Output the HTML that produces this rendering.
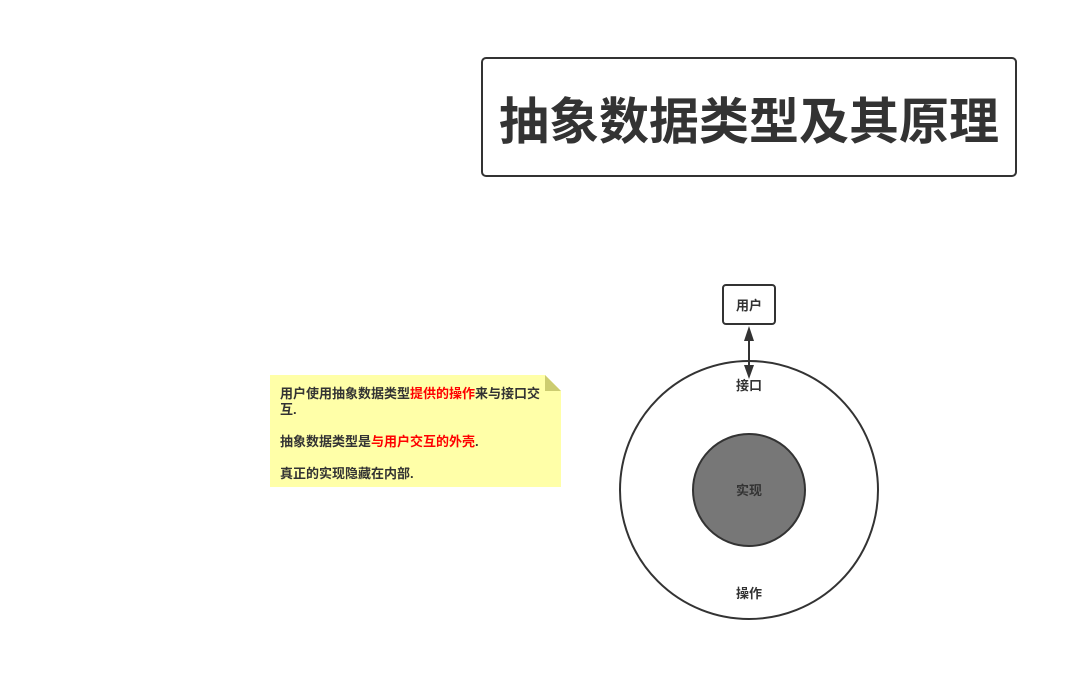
<!DOCTYPE html>
<html><head><meta charset="utf-8">
<style>
html,body{margin:0;padding:0;background:#fff;}
body{width:1078px;height:681px;position:relative;overflow:hidden;font-family:"Liberation Sans","Noto Sans CJK SC",sans-serif;}
.t{font-family:"Liberation Sans","Noto Sans CJK SC",sans-serif;font-weight:bold;fill:#333;}
.nt{position:absolute;left:280px;top:386px;width:272px;font-size:13px;line-height:16px;font-weight:bold;color:#333;}
.r{color:#ff0000;}
</style></head><body>
<svg width="1078" height="681" style="position:absolute;left:0;top:0">
<rect x="482" y="58" width="534" height="118" rx="4" fill="#fff" stroke="#333" stroke-width="2"/>
<text x="749" y="139" text-anchor="middle" class="t" font-size="50">抽象数据类型及其原理</text>
<polygon points="270,375 545,375 561,391 561,487 270,487" fill="#ffffa8"/>
<polygon points="545,375 561,391 545,391" fill="#cccc70"/>
<ellipse cx="749" cy="490" rx="129" ry="129" fill="#fff" stroke="#333" stroke-width="2"/>
<circle cx="749" cy="490" r="56" fill="#777" stroke="#333" stroke-width="2"/>
<rect x="723" y="285" width="52" height="39" rx="3" fill="#fff" stroke="#333" stroke-width="2"/>
<text x="749" y="310" text-anchor="middle" class="t" font-size="13">用户</text>
<line x1="749" y1="338" x2="749" y2="366" stroke="#333" stroke-width="2"/>
<polygon points="749,326 744,341 754,341" fill="#333"/>
<polygon points="749,379 744,365 754,365" fill="#333"/>
<text x="749" y="390" text-anchor="middle" class="t" font-size="13">接口</text>
<text x="749" y="495" text-anchor="middle" class="t" font-size="13">实现</text>
<text x="749" y="598" text-anchor="middle" class="t" font-size="13">操作</text>
</svg>
<div class="nt">用户使用抽象数据类型<span class="r">提供的操作</span>来与接口交互.<br><br>抽象数据类型是<span class="r">与用户交互的外壳</span>.<br><br>真正的实现隐藏在内部.</div>
</body></html>
